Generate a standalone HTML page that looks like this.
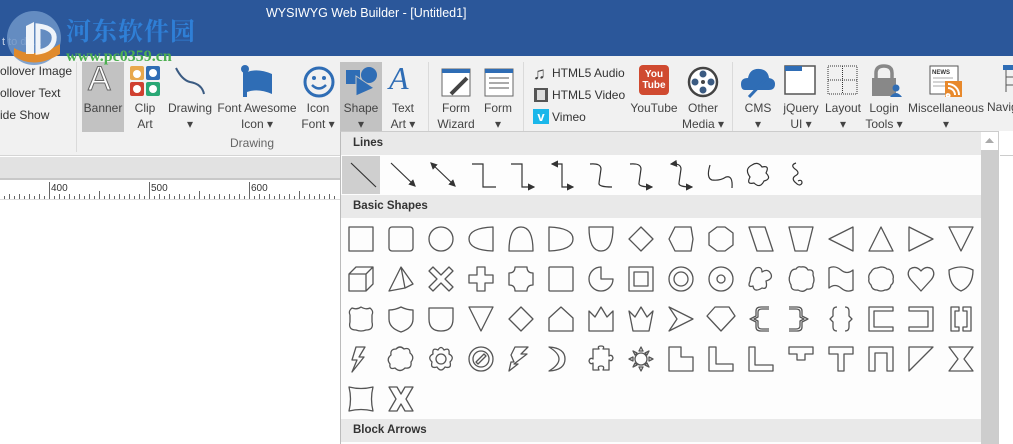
<!DOCTYPE html>
<html><head><meta charset="utf-8"><style>
*{margin:0;padding:0;box-sizing:border-box}
body{width:1013px;height:444px;overflow:hidden;position:relative;background:#fff;font-family:"Liberation Sans","Noto Sans CJK SC",sans-serif;font-size:12px;color:#444}
.a{position:absolute;white-space:nowrap}
.t{text-align:center;line-height:16px;font-size:12px;color:#444}
.h{font-weight:bold;font-size:11.5px;color:#333}
</style></head><body>
<div class="a" style="left:0;top:0;width:1013px;height:56px;background:#2b579a"></div>
<div class="a" style="left:266px;top:6px;color:#fff;font-size:12.5px">WYSIWYG Web Builder - [Untitled1]</div>
<div class="a" style="left:2px;top:36px;color:#c9d4e6;font-size:11px">t to do...</div>
<!-- ribbon -->
<div class="a" style="left:0;top:56px;width:1013px;height:100px;background:#f1f1f1;border-bottom:1px solid #d5d5d5"></div>
<!-- watermark logo -->
<svg class="a" style="left:4px;top:8px;z-index:5" width="60" height="60" viewBox="0 0 60 60"><circle cx="30" cy="30" r="27" fill="#6f95c8" opacity=".85"/><path d="M10 40 Q30 52 56 36 L56 46 Q30 62 10 48Z" fill="#e08a2c"/><path d="M22 18 L30 14 L30 46 L22 46Z" fill="#fff" opacity=".9"/><path d="M34 18 Q52 20 50 32 Q48 42 34 44Z" fill="none" stroke="#fff" stroke-width="5" opacity=".9"/></svg>
<div class="a" style="z-index:5;left:66px;top:12px;color:#2f7fd6;font-size:25px;font-weight:bold;font-family:'Noto Serif CJK SC','Noto Sans CJK SC',serif;letter-spacing:1px">河东软件园</div>
<div class="a" style="z-index:5;left:66px;top:48px;color:#4caf50;font-size:16px;font-weight:bold;font-family:'Liberation Serif',serif">www.pc0359.cn</div>
<div class="a" style="left:0;top:64px;font-size:12px;color:#333">ollover Image</div>
<div class="a" style="left:0;top:86px;font-size:12px;color:#333">ollover Text</div>
<div class="a" style="left:0;top:108px;font-size:12px;color:#333">ide Show</div>
<div class="a" style="left:76px;top:62px;width:1px;height:90px;background:#dadada"></div>
<div class="a" style="left:428px;top:62px;width:1px;height:70px;background:#dadada"></div>
<div class="a" style="left:523px;top:62px;width:1px;height:70px;background:#dadada"></div>
<div class="a" style="left:732px;top:62px;width:1px;height:70px;background:#dadada"></div>
<div class="a" style="left:82px;top:62px;width:42px;height:70px;background:#c2c2c2"></div>
<div class="a" style="left:340px;top:62px;width:42px;height:70px;background:#c2c2c2"></div>
<div class="a" style="left:88px;top:60px;font-size:34px;color:#fff;-webkit-text-stroke:1px #666;font-family:'Liberation Sans';">A</div>
<div class="a t" style="left:82px;top:100px;width:42px">Banner</div>
<svg class="a" style="left:130px;top:66px" width="31" height="31"><rect x="0" y="0" width="14" height="14" rx="2" fill="#e8a84c"/><rect x="16" y="0" width="14" height="14" rx="2" fill="#2f6db5"/><rect x="0" y="16" width="14" height="14" rx="2" fill="#d04030"/><rect x="16" y="16" width="14" height="14" rx="2" fill="#2aa875"/><circle cx="7" cy="8" r="4" fill="#fff"/><circle cx="23" cy="7" r="4" fill="#fff"/><circle cx="7" cy="23" r="4" fill="#fff"/><circle cx="23" cy="23" r="4" fill="#fff"/></svg>
<div class="a t" style="left:125px;top:100px;width:40px">Clip<br>Art</div>
<svg class="a" style="left:172px;top:66px" width="36" height="30"><path d="M4 2 Q10 14 18 16 Q30 18 32 28" fill="none" stroke="#3b5b82" stroke-width="2"/></svg>
<div class="a t" style="left:166px;top:100px;width:48px">Drawing<br>▾</div>
<svg class="a" style="left:240px;top:64px" width="34" height="34"><circle cx="5" cy="5" r="4" fill="#2f6db5"/><rect x="3" y="6" width="4" height="27" fill="#2f6db5"/><path d="M7 8 Q18 4 32 10 L32 30 Q18 24 7 28Z" fill="#2f6db5"/></svg>
<div class="a t" style="left:216px;top:100px;width:82px">Font Awesome<br>Icon ▾</div>
<svg class="a" style="left:302px;top:65px" width="34" height="34"><circle cx="17" cy="17" r="14" fill="none" stroke="#2f6db5" stroke-width="3"/><circle cx="12" cy="13" r="2" fill="#2f6db5"/><circle cx="22" cy="13" r="2" fill="#2f6db5"/><path d="M10 20 Q17 27 24 20" fill="none" stroke="#2f6db5" stroke-width="2.5"/></svg>
<div class="a t" style="left:298px;top:100px;width:40px">Icon<br>Font ▾</div>
<svg class="a" style="left:344px;top:64px" width="34" height="34"><rect x="2" y="6" width="14" height="14" fill="#2f6db5"/><circle cx="25" cy="11" r="8" fill="#2f6db5"/><path d="M12 12 L30 24 L12 32Z" fill="#2f6db5" stroke="#c2c2c2" stroke-width="1"/></svg>
<div class="a t" style="left:340px;top:100px;width:42px">Shape<br>▾</div>
<div class="a" style="left:389px;top:60px;font-size:32px;color:#2f6db5;font-style:italic;font-family:'Liberation Serif',serif">A</div>
<div class="a t" style="left:383px;top:100px;width:40px">Text<br>Art ▾</div>
<svg class="a" style="left:441px;top:68px" width="30" height="30"><rect x="1" y="1" width="28" height="27" fill="#fff" stroke="#666"/><rect x="1" y="1" width="28" height="4" fill="#2f6db5"/><path d="M10 26 L26 10" stroke="#444" stroke-width="4"/></svg>
<div class="a t" style="left:434px;top:100px;width:44px">Form<br>Wizard</div>
<svg class="a" style="left:484px;top:68px" width="30" height="30"><rect x="1" y="1" width="28" height="27" fill="#fff" stroke="#666"/><rect x="1" y="1" width="28" height="4" fill="#2f6db5"/><path d="M5 10h20M5 15h20M5 20h20" stroke="#aaa" stroke-width="2"/></svg>
<div class="a t" style="left:478px;top:100px;width:40px">Form<br>▾</div>
<div class="a" style="left:533px;top:64px;font-size:17px;color:#444">♫</div>
<div class="a" style="left:552px;top:66px;font-size:12px;color:#333">HTML5 Audio</div>
<svg class="a" style="left:534px;top:88px" width="14" height="14"><rect x="0" y="0" width="14" height="14" fill="#555"/><rect x="3" y="2" width="8" height="10" fill="#ddd"/></svg>
<div class="a" style="left:552px;top:88px;font-size:12px;color:#333">HTML5 Video</div>
<div class="a" style="left:533px;top:109px;width:16px;height:15px;background:#1ab7ea;color:#fff;font-weight:bold;text-align:center;line-height:15px;font-size:13px">v</div>
<div class="a" style="left:552px;top:110px;font-size:12px;color:#333">Vimeo</div>
<div class="a" style="left:639px;top:65px;width:30px;height:30px;background:#d04a30;border-radius:4px;color:#fff;font-size:10px;text-align:center;line-height:11px;padding-top:4px;font-weight:bold">You<br>Tube</div>
<div class="a t" style="left:628px;top:100px;width:52px">YouTube</div>
<svg class="a" style="left:686px;top:65px" width="34" height="34"><circle cx="17" cy="17" r="14" fill="#fff" stroke="#444" stroke-width="2.5"/><circle cx="17" cy="9" r="3.5" fill="#3b5b82"/><circle cx="17" cy="25" r="3.5" fill="#3b5b82"/><circle cx="9" cy="17" r="3.5" fill="#3b5b82"/><circle cx="25" cy="17" r="3.5" fill="#3b5b82"/><circle cx="17" cy="17" r="2" fill="#444"/></svg>
<div class="a t" style="left:678px;top:100px;width:50px">Other<br>Media ▾</div>
<svg class="a" style="left:741px;top:64px" width="36" height="34"><path d="M4 26 Q0 26 0 20 Q0 14 7 14 Q9 4 19 5 Q27 6 28 14 Q34 15 34 20 Q34 26 28 26Z" fill="#2f6db5"/><path d="M8 33 L26 14" stroke="#2f6db5" stroke-width="3"/></svg>
<div class="a t" style="left:738px;top:100px;width:40px">CMS<br>▾</div>
<svg class="a" style="left:784px;top:65px" width="32" height="30"><rect x="1" y="1" width="30" height="28" fill="#fff" stroke="#555" stroke-width="1.5"/><rect x="1" y="1" width="17" height="5" fill="#2f6db5"/></svg>
<div class="a t" style="left:780px;top:100px;width:42px">jQuery<br>UI ▾</div>
<svg class="a" style="left:827px;top:65px" width="32" height="30"><rect x="1" y="1" width="29" height="28" fill="none" stroke="#333" stroke-dasharray="1 1"/><path d="M15.5 1v28M1 15h29" stroke="#333" stroke-dasharray="1 1"/></svg>
<div class="a t" style="left:822px;top:100px;width:42px">Layout<br>▾</div>
<svg class="a" style="left:871px;top:64px" width="32" height="34"><path d="M5 14 V9 Q5 2 13 2 Q21 2 21 9 V14" fill="none" stroke="#888" stroke-width="3.5"/><rect x="1" y="14" width="24" height="18" fill="#888"/><circle cx="25" cy="24" r="3.5" fill="#2f6db5"/><path d="M19 33 Q25 25 31 33Z" fill="#2f6db5"/></svg>
<div class="a t" style="left:864px;top:100px;width:40px">Login<br>Tools ▾</div>
<svg class="a" style="left:929px;top:65px" width="34" height="32"><rect x="1" y="1" width="28" height="28" fill="#fff" stroke="#555"/><text x="3" y="9" font-size="6" font-family="Liberation Sans" font-weight="bold" fill="#333">NEWS</text><path d="M4 13h20M4 17h20M4 21h12" stroke="#aaa"/><rect x="16" y="16" width="17" height="16" fill="#e8892c"/><path d="M19 29a1.5 1.5 0 1 0 .1 0M19 23a7 7 0 0 1 7 7M19 19a11 11 0 0 1 11 11" stroke="#fff" stroke-width="2" fill="none"/></svg>
<div class="a t" style="left:906px;top:100px;width:80px">Miscellaneous<br>▾</div>
<svg class="a" style="left:1003px;top:65px" width="10" height="30"><rect x="0" y="0" width="10" height="5" fill="#2f6db5"/><path d="M3 5v22M3 12h7M3 20h7" stroke="#555"/></svg>
<div class="a" style="left:987px;top:100px;font-size:12px;color:#444">Navig</div>
<div class="a" style="left:230px;top:136px;color:#666;font-size:12px">Drawing</div>
<!-- grey bar + ruler -->
<div class="a" style="left:0;top:157px;width:340px;height:23px;background:#e2e2e2;border-bottom:2px solid #c8c8c8"></div>
<svg class="a" style="left:0;top:182px" width="340" height="18">
<rect width="340" height="18" fill="#fff"/>
<g stroke="#666" stroke-width="1">
<path d="M9.5 12v6M19.5 12v6M29.5 12v6M39.5 12v6M49.5 0v18M59.5 12v6M69.5 12v6M79.5 12v6M89.5 12v6M99.5 9v9M109.5 12v6M119.5 12v6M129.5 12v6M139.5 12v6M149.5 0v18M159.5 12v6M169.5 12v6M179.5 12v6M189.5 12v6M199.5 9v9M209.5 12v6M219.5 12v6M229.5 12v6M239.5 12v6M249.5 0v18M259.5 12v6M269.5 12v6M279.5 12v6M289.5 12v6M299.5 9v9M309.5 12v6M319.5 12v6M329.5 12v6M4.5 14v4M14.5 14v4M24.5 14v4M34.5 14v4M44.5 14v4M54.5 14v4M64.5 14v4M74.5 14v4M84.5 14v4M94.5 14v4M104.5 14v4M114.5 14v4M124.5 14v4M134.5 14v4M144.5 14v4M154.5 14v4M164.5 14v4M174.5 14v4M184.5 14v4M194.5 14v4M204.5 14v4M214.5 14v4M224.5 14v4M234.5 14v4M244.5 14v4M254.5 14v4M264.5 14v4M274.5 14v4M284.5 14v4M294.5 14v4M304.5 14v4M314.5 14v4M324.5 14v4M334.5 14v4"/></g>
<text x="51" y="9" font-size="10" font-family="Liberation Sans" fill="#333">400</text><text x="151" y="9" font-size="10" font-family="Liberation Sans" fill="#333">500</text><text x="251" y="9" font-size="10" font-family="Liberation Sans" fill="#333">600</text>
</svg>
<div class="a" style="left:0;top:199px;width:340px;height:1px;background:#ddd"></div>
<!-- dropdown panel -->
<div class="a" style="left:340px;top:131px;width:660px;height:313px;background:#fdfdfd;border-left:1px solid #bbb;border-top:1px solid #ccc"></div>
<div class="a" style="left:341px;top:132px;width:640px;height:23px;background:#e9e9e9"></div>
<div class="a h" style="left:353px;top:137px">Lines</div>
<div class="a" style="left:342px;top:156px;width:38px;height:38px;background:#cfcfcf"></div>
<div class="a" style="left:341px;top:195px;width:640px;height:23px;background:#e9e9e9"></div>
<div class="a h" style="left:353px;top:200px">Basic Shapes</div>
<div class="a" style="left:341px;top:419px;width:640px;height:23px;background:#e9e9e9"></div>
<div class="a h" style="left:353px;top:424px">Block Arrows</div>
<div class="a" style="left:981px;top:132px;width:17px;height:312px;background:#cdcdcd"></div>
<div class="a" style="left:981px;top:132px;width:17px;height:18px;background:#fff"></div>
<svg class="a" style="left:981px;top:132px" width="17" height="18"><path d="M4 11 L8.5 6 L13 11Z" fill="#aaa"/></svg>
<div class="a" style="left:998px;top:131px;width:15px;height:313px;background:#fff;border-left:1px solid #ccc"></div>
<div class="a" style="left:1000px;top:155px;width:13px;height:1px;background:#ccc"></div>
<!-- lines -->
<svg class="a" style="left:340px;top:155px" width="470" height="40" fill="none" stroke="#333" stroke-width="1.2">
<defs><marker id="m" markerWidth="6" markerHeight="6" refX="5" refY="3" orient="auto"><path d="M0 0L6 3L0 6Z" fill="#333" stroke="none"/></marker><marker id="s" markerWidth="6" markerHeight="6" refX="1" refY="3" orient="auto"><path d="M6 0L0 3L6 6Z" fill="#333" stroke="none"/></marker></defs>
<path d="M11 8 L36 32"/>
<path d="M51 8 L75 31" marker-end="url(#m)"/>
<path d="M91 8 L115 31" marker-start="url(#s)" marker-end="url(#m)"/>
<path d="M132 9 H143 V32 H156"/>
<path d="M171 9 H182 V32 H194" marker-end="url(#m)"/>
<path d="M212 9 H222 V32 H233" marker-start="url(#s)" marker-end="url(#m)"/>
<path d="M250 9 Q261 8 261 14 L259 28 Q258 32 272 32"/>
<path d="M290 9 Q301 8 301 14 L299 28 Q298 32 312 32" marker-end="url(#m)"/>
<path d="M331 9 Q341 8 341 14 L339 28 Q338 32 352 32" marker-start="url(#s)" marker-end="url(#m)"/>
<path d="M370 10 Q366 23 372 25 Q380 26 386 22 Q393 20 392 33"/>
<path d="M412 10 Q418 6 422 12 Q430 10 426 18 Q432 24 424 26 Q420 34 414 28 Q406 30 410 22 Q404 14 412 10Z"/>
<path d="M456 8 Q450 10 455 14 Q461 18 455 21 Q451 24 456 28 Q460 32 462 28 Q462 24 458 26"/>
</svg>
<!-- basic shapes -->
<svg class="a" style="left:340px;top:218px" width="640" height="201" fill="none" stroke="#555" stroke-width="1.3" stroke-linejoin="round">
<g transform="translate(8,8)">
<rect x="1" y="1" width="24" height="24"/>
<rect x="41" y="1" width="24" height="24" rx="3"/>
<circle cx="93" cy="13" r="12"/>
<path d="M145 1 V25 Q121 24 121 13 Q121 2 145 1Z"/>
<path d="M161 25 Q161 1 173 1 Q185 1 185 25Z"/>
<path d="M201 1 V25 Q225 24 225 13 Q225 2 201 1Z"/>
<path d="M241 1 H265 Q265 25 253 25 Q241 25 241 1Z"/>
<path d="M293 1 L305 13 L293 25 L281 13Z"/>
<path d="M327 1 L343 1 L345 13 L343 25 L327 25 L321 13Z"/>
<path d="M369 1 L377 1 L385 7 L385 19 L377 25 L369 25 L361 19 L361 7Z"/>
<path d="M401 1 H417 L425 25 H409Z"/>
<path d="M441 1 H465 L459 25 H447Z"/>
<path d="M505 1 V25 L481 13Z"/>
<path d="M533 1 L545 25 H521Z"/>
<path d="M561 1 V25 L585 13Z"/>
<path d="M601 1 H625 L613 25Z"/>
</g>
<g transform="translate(8,48)">
<path d="M1 8 H18 V25 H1Z M1 8 L8 1 H25 V18 L18 25 M18 8 L25 1"/>
<path d="M53 1 L41 25 L57 22 L65 18Z M53 1 L57 22"/>
<path d="M81 5 L85 1 L93 9 L101 1 L105 5 L97 13 L105 21 L101 25 L93 17 L85 25 L81 21 L89 13Z"/>
<path d="M129 1 H137 V9 H145 V17 H137 V25 H129 V17 H121 V9 H129Z"/>
<path d="M167 1 H179 Q179 7 185 7 V19 Q179 19 179 25 H167 Q167 19 161 19 V7 Q167 7 167 1Z"/>
<rect x="201" y="1" width="24" height="24" rx="1"/>
<path d="M253 13 V1 A12 12 0 1 0 265 13Z"/>
<rect x="281" y="1" width="24" height="24"/><rect x="286" y="6" width="14" height="14"/>
<circle cx="333" cy="13" r="12"/><circle cx="333" cy="13" r="7"/>
<circle cx="373" cy="13" r="12"/><circle cx="373" cy="13" r="4"/>
<path d="M408 2 Q414 0 414 6 Q420 2 423 8 Q425 13 418 15 Q420 24 414 22 Q406 27 405 20 Q399 22 402 15 Q402 8 408 2Z"/>
<path d="M453 1 Q458 0 460 4 Q466 3 465 9 Q467 14 465 18 Q465 24 459 23 Q455 27 450 24 Q443 25 443 19 Q440 14 442 9 Q443 3 448 3 Q450 0 453 1Z"/>
<path d="M481 2 Q487 -1 493 4 Q499 9 505 4 V24 Q499 27 493 22 Q487 17 481 22Z"/>
<path d="M533 1 Q537 1 539 3 Q543 3 544 7 Q546 10 545 13 Q546 17 543 19 Q542 24 537 24 Q533 26 529 24 Q524 24 523 19 Q520 16 521 13 Q520 9 523 6 Q525 2 529 2Z"/>
<path d="M573 25 L563 14 Q558 8 562 3 Q568 -1 573 5 Q578 -1 584 3 Q588 8 583 14Z"/>
<path d="M601 4 Q613 -2 625 4 Q625 20 613 25 Q601 20 601 4Z"/>
</g>
<g transform="translate(8,88)">
<path d="M4 2 Q9 4 13 1 Q18 4 22 2 Q26 5 24 9 V16 Q26 24 18 24 Q13 26 8 24 Q0 24 2 16 V9 Q0 5 4 2Z"/>
<path d="M41 4 Q47 4 53 1 Q59 4 65 4 V13 Q65 22 53 26 Q41 22 41 13Z"/>
<path d="M81 2 H105 V13 Q105 25 93 25 Q81 25 81 13Z"/>
<path d="M121 1 H145 L133 25Z"/>
<path d="M173 1 L185 13 L173 25 L161 13Z"/>
<path d="M201 12 L213 1 L225 12 V25 H201Z"/>
<path d="M241 5 L247 11 L253 1 L259 11 L265 5 V25 H241Z"/>
<path d="M281 5 L287 11 L293 1 L299 11 L305 5 L301 25 H285Z"/>
<path d="M321 1 L345 13 L321 25 L329 13Z"/>
<path d="M367 1 H381 L387 10 L373 25 L359 10Z"/>
<path d="M421 1 H413 Q408 1 408 5 V10 L402 13 L408 16 V21 Q408 25 413 25 H421 M421 3 H414 Q410 3 410 6 V11 L406 13 L410 15 V20 Q410 23 414 23 H421"/>
<path d="M441 1 H449 Q454 1 454 5 V10 L460 13 L454 16 V21 Q454 25 449 25 H441 M441 3 H448 Q452 3 452 6 V11 L456 13 L452 15 V20 Q452 23 448 23 H441"/>
<path d="M489 1 Q485 1 485 5 V10 L482 13 L485 16 V21 Q485 25 489 25 M497 1 Q501 1 501 5 V10 L504 13 L501 16 V21 Q501 25 497 25"/>
<path d="M521 1 H545 V5 H526 V21 H545 V25 H521Z"/>
<path d="M561 1 H585 V25 H561 V21 H580 V5 H561Z"/>
<path d="M603 1 H611 V5 H607 V21 H611 V25 H603Z M615 1 H623 V25 H615 V21 H619 V5 H615Z"/>
</g>
<g transform="translate(8,128)">
<path d="M8 1 H17 L11 11 H16 L4 26 L9 14 H4Z"/>
<path d="M48 3 Q52 -1 56 3 Q62 1 62 7 Q67 11 63 16 Q64 23 57 22 Q52 27 47 22 Q41 24 42 18 Q38 13 43 9 Q42 3 48 3Z"/>
<circle cx="93" cy="13" r="5"/><path d="M90 4 Q93 -1 96 4 Q102 1 101 8 Q107 11 102 16 Q104 23 97 21 Q93 27 89 21 Q82 23 84 16 Q79 11 85 8 Q84 1 90 4Z"/>
<circle cx="133" cy="13" r="12"/><circle cx="133" cy="13" r="8"/><path d="M128 16 L136 8 L138 10 L130 18Z"/>
<path d="M167 1 H180 L173 8 H179 L166 18 L170 18 L161 25 L163 16 L166 16 L163 9 Z"/>
<path d="M201 1 Q217 2 217 13 Q217 24 201 25 Q211 19 211 13 Q211 7 201 1Z"/>
<path d="M245 3 H251 Q249 0 253 0 Q257 0 255 3 H261 V10 Q264 8 265 12 Q264 16 261 14 V24 H255 Q257 20 253 20 Q249 20 251 24 H245 V17 Q242 19 241 15 Q242 11 245 13Z"/>
<circle cx="293" cy="13" r="6"/><path d="M293 1 L295 5 L291 5Z M293 25 L295 21 L291 21Z M281 13 L285 11 L285 15Z M305 13 L301 11 L301 15Z M285 5 L289 7 L287 9Z M301 21 L297 19 L299 17Z M301 5 L299 9 L297 7Z M285 21 L287 17 L289 19Z"/>
<path d="M321 1 H333 V11 H345 V25 H321Z"/>
<path d="M361 1 H368 V18 H385 V25 H361Z"/>
<path d="M401 1 H407 V19 H425 V25 H401Z"/>
<path d="M441 1 H465 V8 H457 V14 H449 V8 H441Z"/>
<path d="M481 1 H505 V8 H496 V25 H490 V8 H481Z"/>
<path d="M521 1 H545 V25 H539 V7 H527 V25 H521Z"/>
<path d="M561 1 H585 L561 25Z"/>
<path d="M601 1 H625 L616 13 L625 25 H601 L610 13Z"/>
</g>
<g transform="translate(8,168)">
<path d="M1 1 Q13 4 25 1 Q22 13 25 25 Q13 22 1 25 Q4 13 1 1Z"/>
<path d="M41 1 H49 L53 8 L57 1 H65 L58 13 L65 25 H57 L53 18 L49 25 H41 L48 13Z"/>
</g>
</svg>
</body></html>
